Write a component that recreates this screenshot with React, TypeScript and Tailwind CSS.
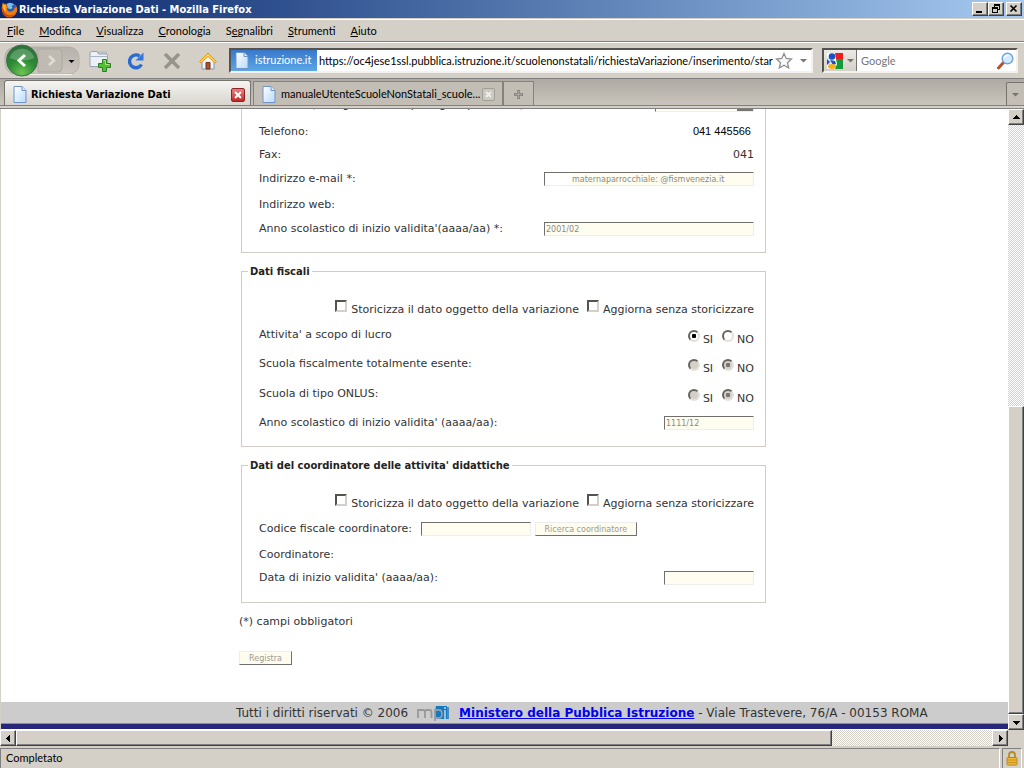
import React from "react";

const ui = "font-[Lato,'Liberation_Sans',sans-serif]";
const uiBold = "font-['DejaVu_Sans_Condensed','DejaVu_Sans',sans-serif] font-bold";
const raised =
  "border border-t-white border-l-white border-r-[#404040] border-b-[#404040] bg-[#d4d0c8] shadow-[inset_-1px_-1px_0_#808080]";
const track =
  "bg-[repeating-conic-gradient(#ffffff_0_25%,#d4d0c8_0_50%)] bg-[length:2px_2px]";
const field =
  "h-[14px] border border-t-[#706f6b] border-l-[#706f6b] border-r-[#eeeeee] border-b-[#eeeeee] bg-[#fffdf0] px-px text-[8px] leading-3 text-[#8b8a84] outline-none";
const smallButton =
  "h-[14px] border border-t-[#eeeeee] border-l-[#eeeeee] border-r-[#706f6b] border-b-[#706f6b] bg-[#fffdf0] pt-px text-[8px] leading-[11px] text-[#9b9a93]";
const fieldset = "mx-[2px] mt-[10px] border border-[#d0cdc4] pl-[17px] pr-[11px]";
const legend = "-ml-[11px] px-[2px] pt-[2px] text-[10px] leading-[14px] font-bold text-[#222222]";

function PageIcon() {
  return (
    <svg width="14" height="17" viewBox="0 0 14 17" className="shrink-0">
      <defs>
        <linearGradient id="sheet" x1="0" y1="0" x2="1" y2="1">
          <stop offset="0" stopColor="#ffffff" />
          <stop offset="1" stopColor="#b9dafb" />
        </linearGradient>
      </defs>
      <path d="M1 .5h8l4 4v12H1z" fill="url(#sheet)" stroke="#6f94c9" />
      <path d="M9 .5v4h4" fill="#dcebfb" stroke="#6f94c9" />
    </svg>
  );
}

function FirefoxIcon() {
  return (
    <svg width="17" height="17" viewBox="0 0 17 17" className="shrink-0">
      <circle cx="9" cy="8" r="6.6" fill="#2a5ca8" />
      <path d="M6 3c2-2 6-1 7 1-2 0-3 1-2 2s0 2-2 2-3-2-3-5z" fill="#7fc1ee" />
      <path
        d="M2 1.5C3 3 4 3.200 5.500 3 5 4 5.500 5 7 5.500 8 6 7 7 6 7.500c0 2.500 2 3.500 4 3 2-.500 3.500-2 3.500-4C15 8 15 5 14 3.500c2.500 2 3 6 1 9C12.500 17 6 17.500 3 14 .200 11 .200 5 2 1.500z"
        fill="#ee7b12"
      />
      <path d="M2 6c-.500 4 2 8 7 8.500 3 0 5-1.500 6-4-1 5-9 7.500-12.500 2.500C1 11 1 8 2 6z" fill="#c33c10" />
      <path d="M2.500 3.500c1 1 2 1 2.500 1-.500 1.500-1 4 0 6C2.500 9 1.500 6 2.500 3.500z" fill="#ffc629" />
    </svg>
  );
}

function Arrow({ dir, gray }: { dir: "up" | "down" | "left" | "right"; gray?: boolean }) {
  const paths = {
    up: "M0 5h7L3.500 1z",
    down: "M0 2h7L3.500 6z",
    left: "M5 0v7L1 3.500z",
    right: "M2 0v7L6 3.500z",
  };
  return (
    <svg width="7" height="7" viewBox="0 0 7 7" shapeRendering={gray ? "auto" : "crispEdges"}>
      <path d={gray ? "M0 2h7l-3.500 3.500z" : paths[dir]} fill={gray ? "#77756f" : "#000"} />
    </svg>
  );
}

function Bevel({ label, className, children }: { label: string; className: string; children: React.ReactNode }) {
  return (
    <button type="button" aria-label={label} className={`flex shrink-0 items-center justify-center ${raised} ${className}`}>
      {children}
    </button>
  );
}

function TitleBar() {
  return (
    <header className="flex h-[18px] items-center bg-linear-to-r from-[#0a246a] to-[#a6caf0] pr-[2px] pl-px">
      <FirefoxIcon />
      <h1 className={`ml-px flex-1 pt-px text-[11px] leading-4 text-white ${uiBold}`}>
        Richiesta Variazione Dati - Mozilla Firefox
      </h1>
      <Bevel label="Riduci a icona" className="h-[14px] w-4">
        <svg width="10" height="10" shapeRendering="crispEdges">
          <path d="M1 7h6v2H1z" />
        </svg>
      </Bevel>
      <Bevel label="Ripristina" className="h-[14px] w-4">
        <svg width="10" height="10" shapeRendering="crispEdges">
          <path d="M3 0h6v6H7V5h1V2H4v1H3zM1 3h6v6H1zM2 5v3h4V5z" fillRule="evenodd" />
        </svg>
      </Bevel>
      <Bevel label="Chiudi" className="ml-[2px] h-[14px] w-4">
        <svg width="10" height="10">
          <path d="M1.500 1.500l6 6M7.500 1.500l-6 6" stroke="#000" strokeWidth="1.700" />
        </svg>
      </Bevel>
    </header>
  );
}

function MenuBar() {
  const items = [
    ["", "F", "ile"],
    ["", "M", "odifica"],
    ["", "V", "isualizza"],
    ["", "C", "ronologia"],
    ["S", "e", "gnalibri"],
    ["", "S", "trumenti"],
    ["", "A", "iuto"],
  ];
  return (
    <nav className="mt-px flex h-[23px] items-center gap-[15px] border-t border-b border-t-white border-b-[#808080] pt-px pl-[7px] text-[11px]">
      {items.map(([before, key, after]) => (
        <button type="button" key={key + after}>
          {before}
          <u>{key}</u>
          {after}
        </button>
      ))}
    </nav>
  );
}

function Toolbar() {
  return (
    <div className="flex h-[37px] items-center border-t border-b border-t-white border-b-[#808080] pr-[6px] pl-[4px]">
      <svg width="78" height="35" viewBox="0 0 78 35" role="img" aria-label="Indietro e avanti">
        <defs>
          <radialGradient id="green" cx=".5" cy=".9" r=".9">
            <stop offset="0" stopColor="#6cc552" />
            <stop offset=".5" stopColor="#2b8a35" />
            <stop offset="1" stopColor="#2a7038" />
          </radialGradient>
          <linearGradient id="pill" x1="0" y1="0" x2="0" y2="1">
            <stop offset="0" stopColor="#b7b3ac" />
            <stop offset="1" stopColor="#cbc7bf" />
          </linearGradient>
        </defs>
        <rect x="1" y="4" width="74" height="27" rx="10" fill="url(#pill)" stroke="#b4b0a8" />
        <path d="M34 6h20q4 0 4 4v15q0 4-4 4H34z" fill="#bfbbb3" stroke="#aca8a0" />
        <path d="M10 31.500h58" stroke="#f3f1ed" />
        <circle cx="18" cy="17.500" r="15.500" fill="url(#green)" stroke="#486b4c" />
        <path d="M5.500 15a13 13 0 0 1 25 0q-12 5-25 0z" fill="#fff" opacity=".22" />
        <path d="M21 12l-6 5.500 6 5.500" fill="none" stroke="#fff" strokeWidth="3" />
        <path d="M45 13l5 4.500-5 4.500" fill="none" stroke="#e0ddd7" strokeWidth="2.500" />
        <path d="M64.500 17h6l-3 3z" />
      </svg>
      <button type="button" aria-label="Nuova scheda" className="ml-[7px]">
        <svg width="23" height="22" viewBox="0 0 23 22">
          <path d="M1 16.500V3q0-1.500 1.500-1.500H8L9.500 4H17q1.500 0 1.500 1.500v11z" fill="#edf1f6" stroke="#96a3b5" />
          <path d="M1.500 6.500h17M9.500 4v-2h8v2" fill="none" stroke="#aab5c3" />
          <path d="M13.500 9.500h4v4h4v4h-4v4h-4v-4h-4v-4h4z" fill="#55bd36" stroke="#26841f" />
          <path d="M14.500 10.500h2v4h4" fill="none" stroke="#a7e27f" />
        </svg>
      </button>
      <button type="button" aria-label="Ricarica" className="ml-[14px]">
        <svg width="20" height="20" viewBox="0 0 20 20">
          <path d="M13.500 5A6.400 6.400 0 1 0 15.500 13.500" fill="none" stroke="#2a6bd0" strokeWidth="3.400" />
          <path d="M17.500 1.500v8H9.500z" fill="#3577dc" />
        </svg>
      </button>
      <button type="button" aria-label="Interrompi" className="ml-[17px]">
        <svg width="18" height="18" viewBox="0 0 18 18">
          <path d="M2 2l14 14M16 2L2 16" stroke="#97948e" strokeWidth="3.600" />
        </svg>
      </button>
      <button type="button" aria-label="Pagina iniziale" className="ml-[17px]">
        <svg width="20" height="18" viewBox="0 0 20 18">
          <path d="M4 9v8h12V9l-6-6z" fill="#eef3fa" stroke="#8296b4" />
          <path d="M1.500 9.500L10 1l8.500 8.500-1.500 1.500-7-6.500-7 6.500z" fill="#ffcf46" stroke="#dc9a2c" />
          <path d="M8 10.500h4V17H8z" fill="#a8552a" stroke="#743414" />
        </svg>
      </button>
      <div className="ml-[11px] flex h-[25px] min-w-0 flex-1 items-center border-2 border-t-[#55534f] border-l-[#55534f] border-r-[#f4f2ee] border-b-[#f4f2ee] bg-white pr-[4px] text-[11px]">
        <span className="flex h-full w-[86px] shrink-0 items-center gap-[6px] bg-linear-to-b from-[#3978cc] to-[#5ca7e6] pl-[4px] text-white">
          <PageIcon />
          istruzione.it
        </span>
        <input
          aria-label="Indirizzo"
          className="min-w-0 flex-1 pt-px pl-[2px] outline-none"
          defaultValue="https://oc4jese1ssl.pubblica.istruzione.it/scuolenonstatali/richiestaVariazione/inserimento/star"
        />
        <svg width="18" height="18" viewBox="0 0 18 18" className="shrink-0">
          <path
            d="M9 1.500l2.200 5 5.300.500-4 3.700 1.200 5.300L9 13.200 4.300 16l1.200-5.300-4-3.700 5.300-.500z"
            fill="#fbfbfb"
            stroke="#8f8f8f"
            strokeWidth="1.300"
          />
        </svg>
        <span className="ml-[7px]">
          <Arrow dir="down" gray />
        </span>
      </div>
      <div className="ml-[9px] flex h-[25px] w-[196px] shrink-0 items-center border-2 border-t-[#55534f] border-l-[#55534f] border-r-[#f4f2ee] border-b-[#f4f2ee] bg-white pr-[2px] text-[11px]">
        <button
          type="button"
          aria-label="Motore di ricerca"
          className="flex h-full w-[33px] items-center gap-[4px] border-r border-[#77756f] bg-linear-to-b from-[#eceae6] to-[#d4d0c8] pl-[3px]"
        >
          <svg width="16" height="16" viewBox="0 0 16 16">
            <path d="M0 0h16v16H0z" fill="#fff" />
            <path d="M8 0h8v6H9z" fill="#ee1c1c" />
            <path d="M9 6h7v10H8l2-5z" fill="#149a3a" />
            <path d="M0 5h5l3 5-2 2H0z" fill="#dfe8fa" />
            <circle cx="5" cy="3.500" r="3.300" fill="#1c50c0" />
            <path d="M3 7l5 1 1 3-3 1z" fill="#1c50c0" />
            <path d="M0 6l3 3-3 3z" fill="#1c50c0" />
            <ellipse cx="5" cy="13.500" rx="4" ry="2.400" fill="#f6b21a" />
          </svg>
          <Arrow dir="down" gray />
        </button>
        <input aria-label="Cerca" placeholder="Google" className="min-w-0 flex-1 pt-px pl-[4px] outline-none placeholder:text-[#777777]" />
        <svg width="17" height="18" viewBox="0 0 17 18" className="shrink-0">
          <path d="M1.500 16l5-5.500" stroke="#b2532b" strokeWidth="3" strokeLinecap="round" />
          <circle cx="10.500" cy="6.500" r="5.300" fill="#d3ebfc" stroke="#6fa5dc" strokeWidth="1.400" />
          <path d="M7.500 6a3 3 0 0 1 4-2.500" fill="none" stroke="#fff" strokeWidth="1.600" />
        </svg>
      </div>
    </div>
  );
}

function TabStrip() {
  return (
    <div className="flex h-[27px] items-end border-b border-[#808080] bg-linear-to-b from-[#aeaaa3] to-[#c9c5bd] pl-[4px] text-[11px]">
      <div className="flex h-[25px] w-[247px] items-center rounded-t-[3px] border border-b-0 border-[#77746d] bg-linear-to-b from-[#f5f4f2] to-[#d8d5ce] pt-[3px] pr-[5px] pl-[8px]">
        <PageIcon />
        <span className={`ml-[4px] flex-1 pt-[2px] ${uiBold}`}>Richiesta Variazione Dati</span>
        <button
          type="button"
          aria-label="Chiudi scheda"
          className="flex h-[14px] w-[14px] items-center justify-center rounded-[2px] border border-[#8f2323] bg-linear-to-b from-[#e58080] to-[#c42424]"
        >
          <svg width="8" height="8">
            <path d="M1 1l6 6M7 1L1 7" stroke="#fff" strokeWidth="2" />
          </svg>
        </button>
      </div>
      <div className="ml-[2px] flex h-6 w-[250px] items-center border border-b-0 border-[#85827b] bg-[#c2beb6] pt-[2px] pr-[7px] pl-[8px]">
        <PageIcon />
        <span className="ml-[5px] flex-1 whitespace-nowrap">manualeUtenteScuoleNonStatali_scuole...</span>
        <button
          type="button"
          aria-label="Chiudi scheda"
          className="flex h-[13px] w-[13px] shrink-0 items-center justify-center rounded-[2px] border border-[#a29f98] bg-[#cbc8c1]"
        >
          <svg width="7" height="7">
            <path d="M1 1l5 5M6 1L1 6" stroke="#efedea" strokeWidth="2" />
          </svg>
        </button>
      </div>
      <button type="button" aria-label="Apri nuova scheda" className="flex h-6 w-[31px] items-center justify-center border border-b-0 border-[#85827b] bg-[#c2beb6] pt-[2px]">
        <svg width="9" height="9">
          <path d="M4.500 0v9M0 4.500h9" stroke="#7b7872" strokeWidth="2.400" />
          <path d="M4.500 1v7M1 4.500h7" stroke="#b9b6af" strokeWidth="0.800" />
        </svg>
      </button>
      <button type="button" aria-label="Elenco schede" className="ml-auto flex h-[23px] w-[18px] items-center justify-center rounded-tl-[2px] border-t border-l border-[#77746d] bg-[#c2beb6]">
        <Arrow dir="down" gray />
      </button>
    </div>
  );
}

function HistoryChoices() {
  const box =
    "h-[12px] w-[12px] shrink-0 appearance-none border-2 border-t-[#55534f] border-l-[#55534f] border-r-[#d4d0c8] border-b-[#d4d0c8] bg-white checked:bg-[#55534f]";
  return (
    <div className="flex h-6 items-center justify-end gap-[8px] pb-[2px]">
      {["Storicizza il dato oggetto della variazione", "Aggiorna senza storicizzare"].map((text) => (
        <label key={text} className="flex items-start gap-[4px]">
          <input type="checkbox" className={box} />
          <span className="pt-[3px]">{text}</span>
        </label>
      ))}
    </div>
  );
}

function YesNoRow({ text, name, value, disabled }: { text: string; name: string; value: string; disabled?: boolean }) {
  const radio =
    "h-[12px] w-[12px] appearance-none rounded-full border-2 border-t-[#66645f] border-l-[#66645f] border-r-[#e4e1db] border-b-[#e4e1db] bg-white checked:bg-[radial-gradient(circle,#000_0_2px,#fff_2.5px)] disabled:bg-[#d4d0c8] disabled:checked:bg-[radial-gradient(circle,#77756f_0_2px,#d4d0c8_2.5px)]";
  return (
    <div role="radiogroup" aria-label={text} className="flex h-[30px] items-center justify-between first-of-type:h-7">
      <span>{text}</span>
      <span className="flex gap-[9px] pt-[7px]">
        {["SI", "NO"].map((option) => (
          <label key={option} className="flex items-start gap-[3px]">
            <input type="radio" name={name} defaultChecked={option === value} disabled={disabled} className={radio} />
            <span className="pt-[3px]">{option}</span>
          </label>
        ))}
      </span>
    </div>
  );
}

function FieldRow({ id, label, value, className, inputClass }: { id: string; label: string; value?: string; className: string; inputClass: string }) {
  return (
    <div className={`flex items-center justify-between ${className}`}>
      <label htmlFor={id}>{label}</label>
      <input id={id} type="text" defaultValue={value} className={`${field} ${inputClass}`} />
    </div>
  );
}

function Form() {
  return (
    <form className="mx-auto w-full max-w-[529px] text-[11px] leading-[14px] text-[#333333]">
      <fieldset className="mx-[2px] border border-t-0 border-[#d0cdc4] pb-[11px] pl-[17px] pr-[11px]">
        <div className="mb-[7px] flex h-[3px] items-end justify-between overflow-hidden">
          <label htmlFor="gestione">Gestione (obbligatorio solo per ogni tipo scuola)</label>
          <select
            id="gestione"
            className={`${field} w-[99px] shrink-0 appearance-none bg-[linear-gradient(to_right,#fffdf0_81px,#77756f_81px)]`}
          />
        </div>
        <div className="flex h-6 items-center justify-between">
          <span className="pt-px">Telefono:</span>
          <span className="pr-[3px] font-['Liberation_Sans',Arial,sans-serif] text-black">041 445566</span>
        </div>
        <div className="flex h-6 items-center justify-between">
          <span>Fax:</span>
          <span>041</span>
        </div>
        <FieldRow
          id="email"
          label="Indirizzo e-mail *:"
          value="maternaparrocchiale: @fismvenezia.it"
          className="h-6"
          inputClass="w-[210px] bg-linear-to-r from-white from-[27px] to-[#fffdf0] to-[27px] pl-[27px]"
        />
        <div className="flex h-[26px] items-center pt-px">Indirizzo web:</div>
        <FieldRow id="anno" label="Anno scolastico di inizio validita'(aaaa/aa) *:" value="2001/02" className="h-6" inputClass="w-[210px]" />
      </fieldset>

      <fieldset className={`${fieldset} pb-[9px]`}>
        <legend className={legend}>Dati fiscali</legend>
        <div className="pt-[18px]">
          <HistoryChoices />
        </div>
        <div>
          <YesNoRow text="Attivita' a scopo di lucro" name="lucro" value="SI" />
          <YesNoRow text="Scuola fiscalmente totalmente esente:" name="esente" value="NO" disabled />
          <YesNoRow text="Scuola di tipo ONLUS:" name="onlus" value="NO" disabled />
        </div>
        <FieldRow id="annoFiscale" label="Anno scolastico di inizio validita' (aaaa/aa):" value="1111/12" className="h-7" inputClass="w-[90px]" />
      </fieldset>

      <fieldset className={`${fieldset} pb-[13px]`}>
        <legend className={legend}>Dati del coordinatore delle attivita' didattiche</legend>
        <div className="pt-[18px]">
          <HistoryChoices />
        </div>
        <div className="flex h-7 items-center">
          <label htmlFor="codice">Codice fiscale coordinatore:</label>
          <input id="codice" type="text" className={`${field} ml-[9px] w-[110px]`} />
          <button type="button" className={`${smallButton} ml-[4px] w-[102px]`}>
            Ricerca coordinatore
          </button>
        </div>
        <div className="flex h-6 items-center">Coordinatore:</div>
        <FieldRow id="data" label="Data di inizio validita' (aaaa/aa):" className="h-[22px]" inputClass="w-[90px]" />
      </fieldset>

      <p className="mt-[12px]">(*) campi obbligatori</p>
      <button type="submit" className={`${smallButton} mt-[22px] block w-[53px]`}>
        Registra
      </button>
    </form>
  );
}

function Footer() {
  return (
    <footer className="mt-auto mb-px flex h-[27px] items-center gap-[9px] border-b-[5px] border-[#27277a] bg-[#cccccc] pl-[235px] text-[12px] whitespace-nowrap text-[#333333] shadow-[inset_0_-1px_0_#8a8aa0]">
      <span>Tutti i diritti riservati © 2006</span>
      <svg width="33" height="15" viewBox="0 0 33 15" role="img" aria-label="mpi">
        <path d="M19 0h11v13H20q-3-6-1-13z" fill="#1878be" />
        <path d="M1 12V4h5q2 0 2 2v6M8 6q0-2 2-2h2.500q2 0 2 2v6" fill="none" stroke="#999" strokeWidth="1.800" />
        <path d="M18 15V4h4q3 0 3 4t-3 4h-4" fill="none" stroke="#8e9daa" strokeWidth="1.800" />
        <path d="M28 4v9M28 1v2" stroke="#a9d7f5" strokeWidth="1.600" />
        <path d="M31 1v12" stroke="#1878be" strokeWidth="1.500" />
      </svg>
      <span>
        <a href="#ministero" className="font-bold text-[#0000ee] underline">
          Ministero della Pubblica Istruzione
        </a>{" "}
        - Viale Trastevere, 76/A - 00153 ROMA
      </span>
    </footer>
  );
}

export default function App() {
  return (
    <div className={`flex h-screen flex-col overflow-hidden bg-[#d4d0c8] text-black ${ui}`}>
      <TitleBar />
      <MenuBar />
      <Toolbar />
      <TabStrip />
      <div className="mt-[2px] flex min-h-0 flex-1 border-t border-[#808080]">
        <main className="flex min-w-0 flex-1 flex-col overflow-hidden border-l border-[#d4d0c8] bg-white font-['DejaVu_Sans',Verdana,sans-serif]">
          <div className="pr-[2px]">
            <Form />
          </div>
          <Footer />
        </main>
        <div className={`flex w-4 flex-col ${track}`}>
          <Bevel label="Scorri su" className="h-4 w-4">
            <Arrow dir="up" />
          </Bevel>
          <div className="flex-[282]" />
          <div className={`w-4 flex-[307] ${raised}`} />
          <Bevel label="Scorri giu" className="h-4 w-4">
            <Arrow dir="down" />
          </Bevel>
        </div>
      </div>
      <div className="flex h-4 pr-4">
        <div className={`flex h-4 flex-1 ${track}`}>
          <Bevel label="Scorri a sinistra" className="h-4 w-4">
            <Arrow dir="left" />
          </Bevel>
          <div className={`h-4 flex-[816] ${raised}`} />
          <div className="flex-[160]" />
          <Bevel label="Scorri a destra" className="h-4 w-4">
            <Arrow dir="right" />
          </Bevel>
        </div>
      </div>
      <div className="mt-[2px] flex h-5 gap-[2px] pr-[2px] text-[11px]">
        <div role="status" className="flex flex-1 items-center border-t border-r border-l border-t-[#808080] border-l-[#808080] border-r-white pl-[5px]">
          Completato
        </div>
        <div className="flex w-5 items-center justify-center border-t border-r border-l border-t-[#808080] border-l-[#808080] border-r-white">
          <svg width="12" height="15" viewBox="0 0 12 15">
            <path d="M3 7V4q0-3 3-3t3 3v3" fill="none" stroke="#b58a26" strokeWidth="1.800" />
            <rect x="1" y="6.500" width="10" height="7.500" rx="1" fill="#ecb92f" stroke="#b8841b" />
            <path d="M2 9h8M2 11.500h8" stroke="#c89322" />
          </svg>
        </div>
      </div>
    </div>
  );
}
